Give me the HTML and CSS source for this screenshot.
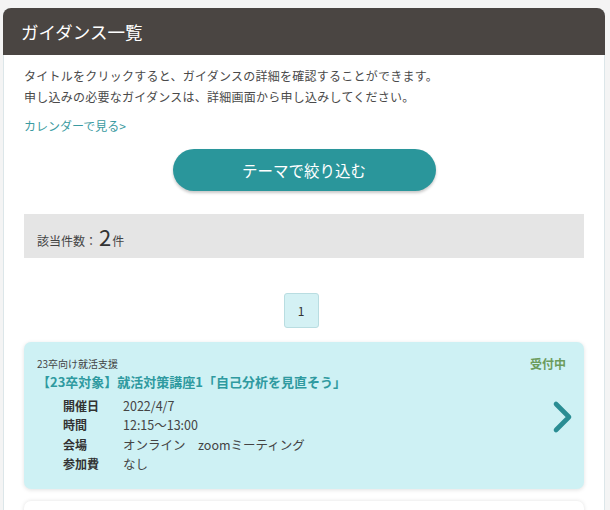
FILE: index.html
```html
<!DOCTYPE html>
<html lang="ja">
<head>
<meta charset="utf-8">
<link rel="stylesheet" href="styles.css">
</head>
<body>
<div class="panel">
  <div class="panel-head">ガイダンス一覧</div>
  <div class="panel-body">
    <p class="desc">タイトルをクリックすると、ガイダンスの詳細を確認することができます。<br>申し込みの必要なガイダンスは、詳細画面から申し込みしてください。</p>
    <a class="cal-link" href="#">カレンダーで見る&gt;</a>
    <div class="btn-wrap"><button class="filter-btn">テーマで絞り込む</button></div>
    <div class="count-box">該当件数：<span class="count-num">2</span>件</div>
    <div class="pager"><span class="page">1</span></div>
    <div class="card">
      <div class="card-top">
        <span class="cat">23卒向け就活支援</span>
        <span class="status">受付中</span>
      </div>
      <div class="card-title">【23卒対象】就活対策講座1「自己分析を見直そう」</div>
      <div class="card-main">
        <dl class="info">
          <dt>開催日</dt><dd>2022/4/7</dd>
          <dt>時間</dt><dd>12:15～13:00</dd>
          <dt>会場</dt><dd>オンライン　zoomミーティング</dd>
          <dt>参加費</dt><dd>なし</dd>
        </dl>
        <svg class="chev" width="22" height="34" viewBox="0 0 22 34"><path d="M4 4 L17 17 L4 30" fill="none" stroke="#2a8d93" stroke-width="4.6" stroke-linecap="round" stroke-linejoin="round"/></svg>
      </div>
    </div>
    <div class="card card-white"></div>
  </div>
</div>
</body>
</html>
```
FILE: styles.css
```css
html, body {
  margin: 0;
  padding: 0;
}
body {
  background: #f4f4f4;
  padding: 8px 5px 0 3px;
  font-family: "Noto Sans CJK JP", "Noto Sans", sans-serif;
  color: #444;
  overflow: hidden;
  height: 502px;
}
.panel {
  background: #fff;
  border: 1px solid #dce6e9;
  border-top: none;
  border-radius: 8px 8px 0 0;
  height: 560px;
}
.panel-head {
  background: #4a4542;
  color: #fff;
  height: 47px;
  line-height: 47px;
  padding-left: 18px;
  font-size: 17.5px;
  border-radius: 8px 8px 0 0;
  margin: 0 -1px;
}
.panel-body {
  padding: 10px 20px 0 20px;
}
.desc {
  margin: 0;
  font-size: 12px;
  letter-spacing: 0.25px;
  line-height: 21px;
  color: #4a4a4a;
}
.cal-link {
  display: block;
  margin-top: 9px;
  font-size: 12px;
  line-height: 20px;
  color: #3b9ba1;
  text-decoration: none;
}
.btn-wrap {
  display: flex;
  justify-content: center;
  margin-top: 13px;
}
.filter-btn {
  width: 263px;
  height: 42px;
  border: none;
  border-radius: 21px;
  background: #2a969b;
  color: #fff;
  font-family: inherit;
  font-size: 15.5px;
  box-shadow: 0 2px 3px rgba(0,0,0,0.22);
  padding: 0;
}
.count-box {
  margin-top: 23px;
  background: #e5e5e5;
  height: 44px;
  box-sizing: border-box;
  padding: 6px 0 0 13px;
  font-size: 12px;
  color: #444;
  display: flex;
  align-items: baseline;
}
.count-num {
  font-size: 22px;
  margin: 0 1px 0 2px;
  color: #333;
}
.pager {
  display: flex;
  justify-content: center;
  margin-top: 35px;
  padding-right: 6px;
}
.page {
  width: 33px;
  height: 33px;
  border: 1px solid #b9dde1;
  border-radius: 3px;
  background: #d4f1f4;
  display: flex;
  align-items: center;
  justify-content: center;
  font-size: 12px;
  color: #333;
}
.card {
  margin-top: 14px;
  background: #cef1f4;
  border-radius: 7px;
  box-shadow: 0 1px 4px rgba(0,0,0,0.12);
  padding: 13px 18px 15px 13px;
}
.card-top {
  display: flex;
  justify-content: space-between;
  align-items: center;
  height: 16px;
}
.cat {
  font-size: 10px;
  color: #444;
}
.status {
  font-size: 12px;
  font-weight: bold;
  color: #6c9c5c;
}
.card-title {
  font-size: 13px;
  font-weight: bold;
  color: #2f9aa0;
  line-height: 20px;
  margin-top: 1px;
}
.card-main {
  display: flex;
  align-items: center;
  justify-content: space-between;
}
.info {
  margin: 4px 0 0 26px;
  display: grid;
  grid-template-columns: 60px auto;
  row-gap: 0;
  font-size: 12.5px;
  line-height: 19.4px;
}
.info dt {
  font-weight: bold;
  color: #333;
  font-size: 12px;
}
.info dd {
  margin: 0;
  color: #444;
}
.chev {
  margin-top: -31px;
  margin-right: -8px;
}
.card-white {
  margin-top: 12px;
  background: #fff;
  height: 40px;
  padding: 0;
  box-shadow: 0 0 4px rgba(0,0,0,0.12);
}
```
